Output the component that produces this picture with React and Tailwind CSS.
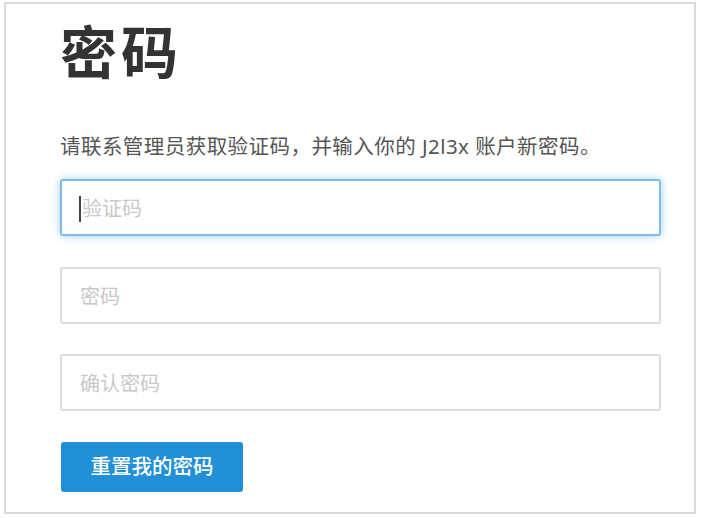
export default function App() {
  const font = { fontFamily: '"Noto Sans", "Noto Sans CJK SC", sans-serif' };
  return (
    <div className="w-[702px] h-[518px] bg-white pt-[2px] pl-[4px]" style={font}>
      <div className="w-[692px] h-[512px] border-2 border-[#dadada] pl-[54px] pr-[33px] flex flex-col">
        <h1 className="text-[57px] leading-none font-bold text-[#333333] mt-[20px] tracking-[4px]">密码</h1>
        <p className="text-[20.5px] leading-none text-[#555555] mt-[55px] tracking-[0.45px]">
          请联系管理员获取验证码，并输入你的 J2l3x 账户新密码。
        </p>
        <div className="mt-[22px] h-[57px] rounded-[3px] border-2 border-[#7cbcf0] shadow-[0_0_8px_rgba(102,175,233,0.6)] flex items-center pl-[17px] pt-[3px]">
          <span className="w-[2px] h-[26px] bg-[#444] mr-[1px]" />
          <span className="text-[20px] text-[#c8c8c8]">验证码</span>
        </div>
        <div className="mt-[31px] h-[57px] rounded-[3px] border-2 border-[#dddddd] flex items-center pl-[18px] pt-[3px]">
          <span className="text-[20px] text-[#c8c8c8]">密码</span>
        </div>
        <div className="mt-[30px] h-[57px] rounded-[3px] border-2 border-[#dddddd] flex items-center pl-[18px] pt-[3px]">
          <span className="text-[20px] text-[#c8c8c8]">确认密码</span>
        </div>
        <div className="mt-[31px]">
          <button className="w-[182px] h-[50px] ml-[1px] rounded-[3px] bg-[#2290d6] text-white text-[20.5px] font-medium flex items-center justify-center">
            重置我的密码
          </button>
        </div>
      </div>
    </div>
  );
}
